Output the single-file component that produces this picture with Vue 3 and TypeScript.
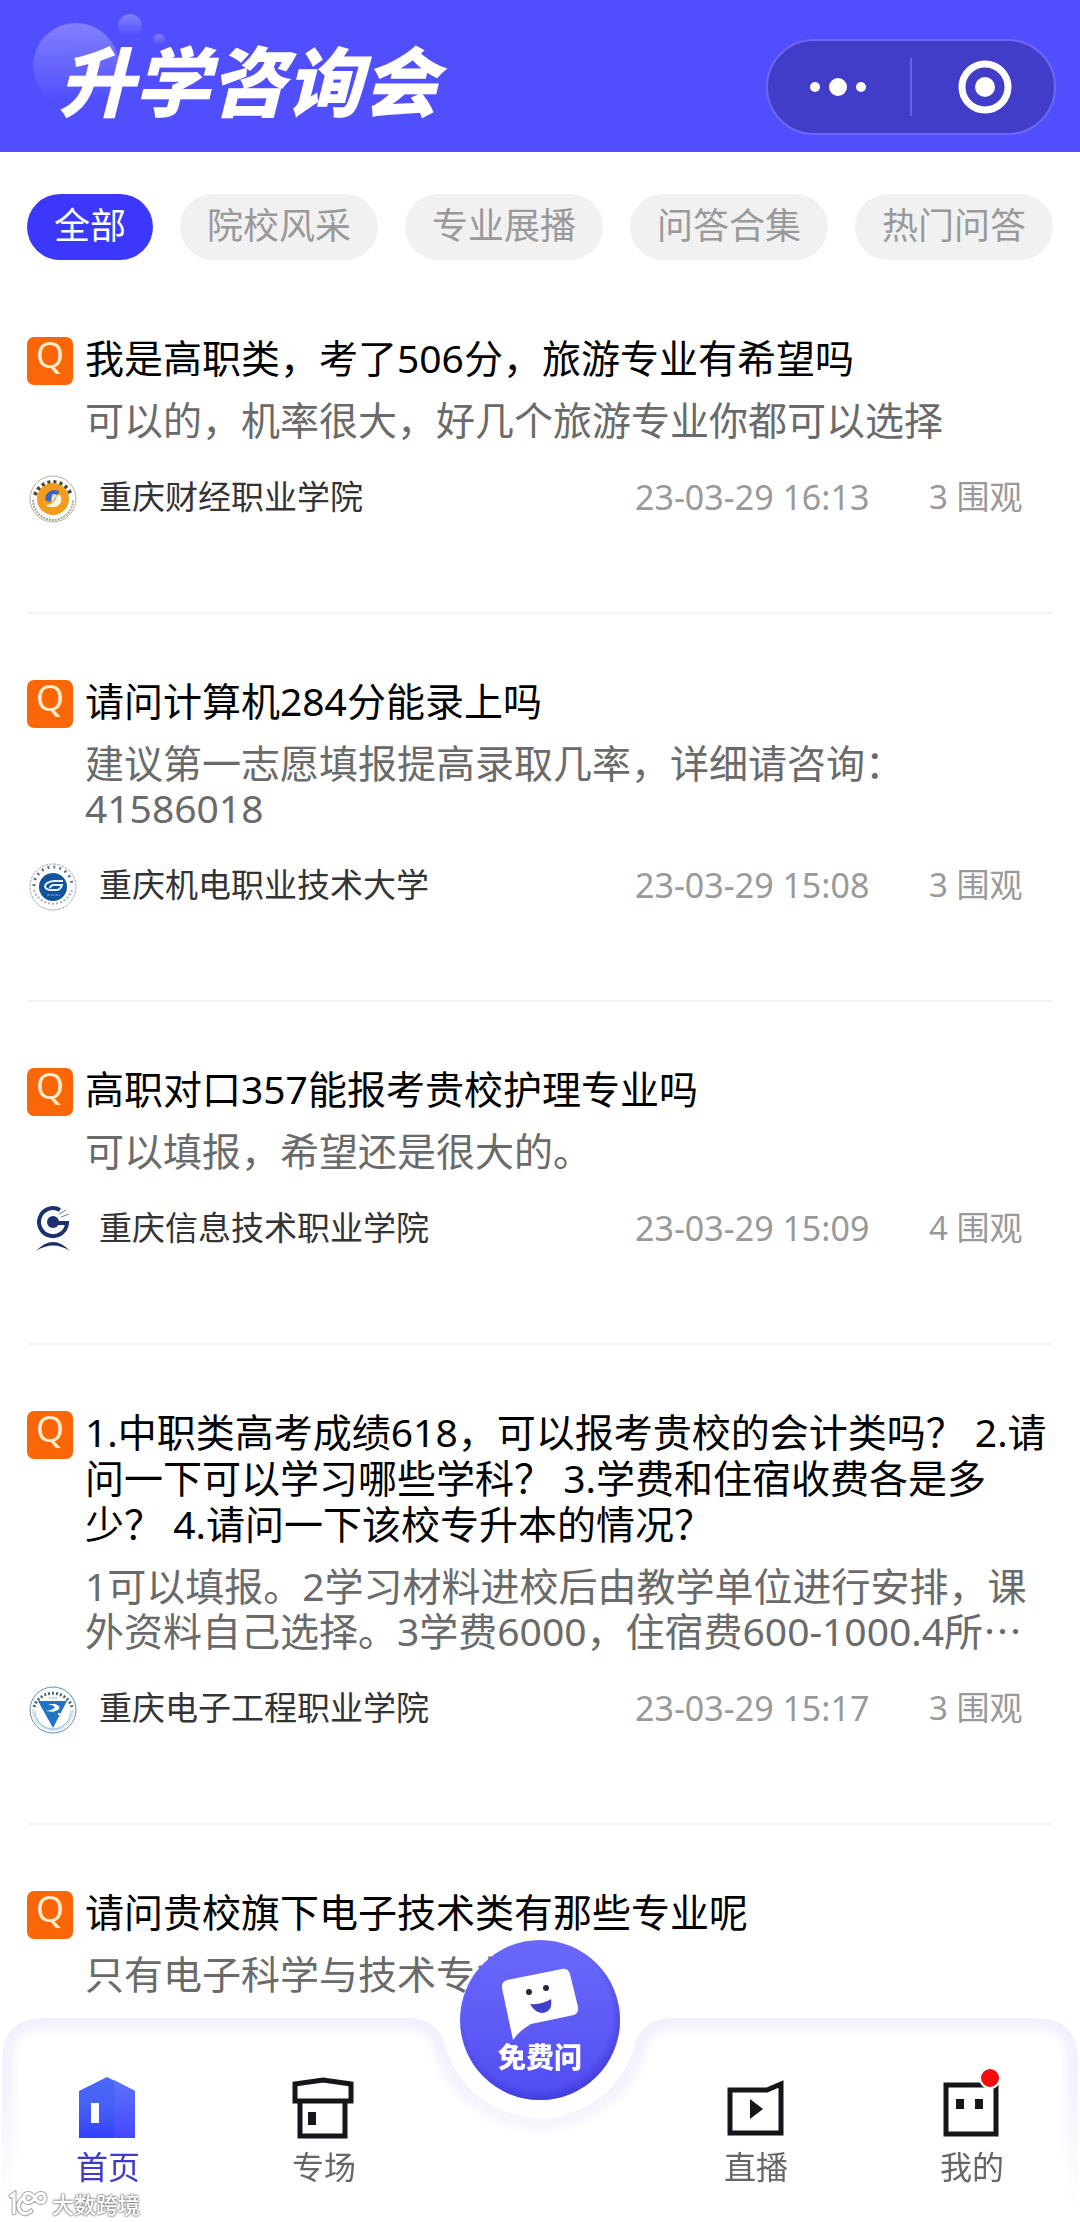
<script setup lang="ts">
import { ref } from 'vue'

interface Question {
  title: string
  answer: string
  school?: string
  logo?: 'finance' | 'mechanic' | 'info' | 'electronic'
  time?: string
  views?: number
}

const categories = ['全部', '院校风采', '专业展播', '问答合集', '热门问答']
const activeCategory = ref(0)

const questions: Question[] = [
  {
    title: '我是高职类，考了506分，旅游专业有希望吗',
    answer: '可以的，机率很大，好几个旅游专业你都可以选择',
    school: '重庆财经职业学院',
    logo: 'finance',
    time: '23-03-29 16:13',
    views: 3,
  },
  {
    title: '请问计算机284分能录上吗',
    answer: '建议第一志愿填报提高录取几率，详细请咨询：41586018',
    school: '重庆机电职业技术大学',
    logo: 'mechanic',
    time: '23-03-29 15:08',
    views: 3,
  },
  {
    title: '高职对口357能报考贵校护理专业吗',
    answer: '可以填报，希望还是很大的。',
    school: '重庆信息技术职业学院',
    logo: 'info',
    time: '23-03-29 15:09',
    views: 4,
  },
  {
    title: '1.中职类高考成绩618，可以报考贵校的会计类吗？ 2.请问一下可以学习哪些学科？ 3.学费和住宿收费各是多少？ 4.请问一下该校专升本的情况？',
    answer: '1可以填报。2学习材料进校后由教学单位进行安排，课外资料自己选择。3学费6000，住宿费600-1000.4所⋯',
    school: '重庆电子工程职业学院',
    logo: 'electronic',
    time: '23-03-29 15:17',
    views: 3,
  },
  {
    title: '请问贵校旗下电子技术类有那些专业呢',
    answer: '只有电子科学与技术专业',
  },
]
</script>

<template>
  <div class="page" lang="zh-CN">
    <header class="header">
      <svg class="bubbles" width="180" height="120" viewBox="0 0 180 120" aria-hidden="true">
        <defs>
          <linearGradient id="bubble" x1="0" y1="0" x2="0" y2="1">
            <stop offset="0" stop-color="#8280ff" />
            <stop offset="0.9" stop-color="#8280ff" stop-opacity="0" />
          </linearGradient>
        </defs>
        <circle cx="76" cy="66" r="43" fill="url(#bubble)" />
        <circle cx="130" cy="26" r="12" fill="url(#bubble)" />
        <circle cx="159" cy="40" r="6" fill="url(#bubble)" />
      </svg>
      <h1 class="brand">升学咨询会</h1>
      <div class="capsule">
        <button class="capsule-btn" type="button" aria-label="更多">
          <svg width="60" height="60" viewBox="0 0 60 60" fill="#fff">
            <circle cx="6" cy="30" r="5" />
            <circle cx="29" cy="30" r="9" />
            <circle cx="52" cy="30" r="5" />
          </svg>
        </button>
        <span class="capsule-line"></span>
        <button class="capsule-btn" type="button" aria-label="关闭">
          <svg width="60" height="60" viewBox="0 0 60 60">
            <circle cx="32" cy="30" r="23" fill="none" stroke="#fff" stroke-width="7" />
            <circle cx="32" cy="30" r="10" fill="#fff" />
          </svg>
        </button>
      </div>
    </header>

    <nav class="categories">
      <button
        v-for="(name, i) in categories"
        :key="name"
        type="button"
        class="category"
        :class="{ active: i === activeCategory }"
        @click="activeCategory = i"
      >{{ name }}</button>
    </nav>

    <main class="list">
      <article v-for="q in questions" :key="q.title" class="question">
        <div class="content">
          <span class="badge">Q</span>
          <div class="texts">
            <h2 class="title">{{ q.title }}</h2>
            <p class="answer">{{ q.answer }}</p>
          </div>
        </div>
        <div v-if="q.school" class="meta">
          <svg v-if="q.logo === 'finance'" class="logo" viewBox="0 0 48 48" fill="none" aria-hidden="true">
            <circle cx="24" cy="24" r="23" stroke="#b5b19b" />
            <path d="M6 20A19 19 0 0 1 42 20" stroke="#4a4632" stroke-width="4" stroke-dasharray="3 3" />
            <path d="M4 25A20 20 0 0 0 44 25" stroke="#a3a59f" stroke-width="2" stroke-dasharray="2 1" />
            <circle cx="24" cy="24" r="16" fill="#f39c1b" />
            <path d="M16 24Q17 15 27 15Q32 16 29 19Q22 20 22 26Q18 28 16 24Z" fill="#3f62c4" />
            <path d="M32 21Q34 30 26 32Q19 33 17 30Q25 30 28 21Q30 19 32 21Z" fill="#fff3d8" />
            <path d="M24 19Q27 19 28 21Q24 24 24 28Q21 23 24 19Z" fill="#dfe6f5" />
          </svg>
          <svg v-else-if="q.logo === 'mechanic'" class="logo" viewBox="0 0 48 48" fill="none" aria-hidden="true">
            <circle cx="24" cy="24" r="23" stroke="#93a9b5" stroke-dasharray="3 1" />
            <path d="M5 23A19 19 0 0 1 43 23" stroke="#5d7686" stroke-width="3" stroke-dasharray="2 4" />
            <path d="M5 27A20 20 0 0 0 43 27" stroke="#a3b4bd" stroke-width="2" stroke-dasharray="2 2" />
            <circle cx="24" cy="24" r="14" fill="#11549c" />
            <path d="M34 18H25Q17 19 16 23Q16 27 23 27H28Q32 26 33 22H24Q21 23 21 25" stroke="#eaf4ff" stroke-width="2" />
            <path d="M18 32H31" stroke="#8fb6dd" stroke-width="1" stroke-dasharray="3 1" />
          </svg>
          <svg v-else-if="q.logo === 'info'" class="logo" viewBox="0 0 48 48" fill="none" aria-hidden="true">
            <path d="M31 4A14 14 0 1 0 38 17H25" stroke="#1c2f6e" stroke-width="4" />
            <circle cx="24" cy="16" r="6" fill="#1c2f6e" />
            <path d="M30 8L37 4M32 11L40 8" stroke="#6e7faf" stroke-width="1" />
            <path d="M7 45Q24 27 41 45Q24 34 7 45Z" fill="#1c2f6e" />
          </svg>
          <svg v-else class="logo" viewBox="0 0 48 48" fill="none" aria-hidden="true">
            <circle cx="24" cy="24" r="23" stroke="#5b8fb6" />
            <path d="M5 21A20 20 0 0 1 43 21" stroke="#47667f" stroke-width="3" stroke-dasharray="2 2" />
            <path d="M4 24A20 20 0 0 0 44 24" stroke="#b4cfe4" stroke-width="2" stroke-dasharray="1 1" />
            <path d="M6 25A18 18 0 0 0 42 25" stroke="#8fb8d8" />
            <path d="M20 12H28" stroke="#6f9fc8" stroke-width="1" stroke-dasharray="2 1" />
            <path d="M9 15H38L24 42Z" fill="#1f74c9" />
            <path d="M19 18H26Q33 20 29 24Q25 27 17 25Q24 24 26 21Q24 19 19 18Z" fill="#fff" />
            <path d="M29 27H31V29H29Z" fill="#fff" />
          </svg>
          <span class="school">{{ q.school }}</span>
          <time class="time">{{ q.time }}</time>
          <span class="views">{{ q.views }} 围观</span>
        </div>
      </article>
    </main>

    <nav class="tabbar">
      <svg class="tabbar-bg" viewBox="0 0 1080 222" preserveAspectRatio="xMidYMin slice" aria-hidden="true">
        <defs>
          <clipPath id="bar-clip">
            <path d="M2 230V60Q2 18 44 18H408Q436 18 445 44A98 98 0 0 0 635 44Q644 18 672 18H1036Q1078 18 1078 60V230Z" />
          </clipPath>
          <linearGradient id="bar-edge" x1="0" y1="0" x2="0" y2="1">
            <stop offset="0" stop-color="#f1f0fd" />
            <stop offset="0.3" stop-color="#f3f2fd" />
            <stop offset="0.6" stop-color="#f8f8fe" />
            <stop offset="1" stop-color="#fff" stop-opacity="0" />
          </linearGradient>
          <filter id="bar-soft" x="-5%" y="-20%" width="110%" height="140%">
            <feGaussianBlur stdDeviation="5" />
          </filter>
        </defs>
        <g clip-path="url(#bar-clip)">
          <rect width="1080" height="230" fill="#fff" />
          <path d="M2 230V60Q2 18 44 18H408Q436 18 445 44A98 98 0 0 0 635 44Q644 18 672 18H1036Q1078 18 1078 60V230" fill="none" stroke="url(#bar-edge)" stroke-width="24" filter="url(#bar-soft)" />
        </g>
      </svg>

      <a class="tab current" href="#home">
        <svg class="tab-icon" viewBox="0 0 64 64" aria-hidden="true">
          <defs>
            <linearGradient id="home-left" x1="0" y1="0" x2="0" y2="1">
              <stop offset="0" stop-color="#4b68f8" />
              <stop offset="0.5" stop-color="#4560f6" />
              <stop offset="1" stop-color="#3340fb" />
            </linearGradient>
            <linearGradient id="home-right" x1="0" y1="0" x2="0" y2="1">
              <stop offset="0" stop-color="#5974fb" />
              <stop offset="1" stop-color="#4747fb" />
            </linearGradient>
          </defs>
          <path d="M3 15L31 1L59 15V62H3Z" fill="url(#home-left)" />
          <path d="M38 4L59 15V62H38Z" fill="url(#home-right)" />
          <rect x="15" y="27" width="8" height="20" fill="#fff" />
        </svg>
        <span>首页</span>
      </a>
      <a class="tab" href="#special">
        <svg class="tab-icon" viewBox="0 0 64 64" fill="none" stroke="#15161a" stroke-width="5" aria-hidden="true">
          <path d="M3 8L31 4L59 8V25H3Z" />
          <path d="M8 25V60H53V25" />
          <rect x="16" y="36" width="8" height="13" fill="#15161a" stroke="none" />
        </svg>
        <span>专场</span>
      </a>
      <div class="ask-slot">
        <button class="ask" type="button">
          <svg class="ask-art" viewBox="0 0 162 162" aria-hidden="true">
            <defs>
              <linearGradient id="ask-ball" x1="0" y1="0" x2="0" y2="1">
                <stop offset="0" stop-color="#6a68fb" />
                <stop offset="0.5" stop-color="#5f5cf6" />
                <stop offset="1" stop-color="#504cf2" />
              </linearGradient>
              <radialGradient id="ask-rim" cx="0.48" cy="0.46" r="0.54">
                <stop offset="0.86" stop-color="#3a36cf" stop-opacity="0" />
                <stop offset="1" stop-color="#3a36cf" stop-opacity="0.6" />
              </radialGradient>
            </defs>
            <circle cx="81" cy="81" r="80" fill="url(#ask-ball)" />
            <circle cx="81" cy="81" r="80" fill="url(#ask-rim)" />
            <path d="M48 41L103 30Q109 29 111 35L119 68Q120 74 115 76L72 85Q61 91 54 101L43 49Q42 43 48 41Z" fill="#fff" />
            <circle cx="70" cy="53" r="3" fill="#26263a" />
            <circle cx="87" cy="49" r="3" fill="#26263a" />
            <path d="M71 65Q83 66 92 60Q94 72 84 74Q76 74 71 65Z" fill="#443fc9" />
          </svg>
          <span class="ask-text">免费问</span>
        </button>
      </div>
      <a class="tab" href="#live">
        <svg class="tab-icon" viewBox="0 0 64 64" fill="none" stroke="#15161a" stroke-width="5" aria-hidden="true">
          <path d="M6 14H43L57 8V57H6Z" />
          <path d="M26 23L39 33L26 43Z" fill="#15161a" stroke="none" />
        </svg>
        <span>直播</span>
      </a>
      <a class="tab" href="#mine">
        <svg class="tab-icon" viewBox="0 0 64 64" fill="none" aria-hidden="true">
          <rect x="6" y="9" width="50" height="49" stroke="#15161a" stroke-width="5" />
          <path d="M16 23H24V33H16ZM35 23H43V33H35Z" fill="#15161a" />
          <circle cx="50" cy="2" r="10" fill="#f40b0d" stroke="#fff" stroke-width="2" />
        </svg>
        <span>我的</span>
      </a>

      <div class="watermark">
        <svg width="40" height="28" viewBox="0 0 40 28" fill="none" stroke-linecap="round" aria-hidden="true">
          <g stroke="#a8a8a8" stroke-width="5">
            <path d="M3 6L6 4V23M15 8Q7 15 13 22Q18 26 23 21" />
            <path d="M27 8C22 1 16 3 16 8S22 15 27 8C31 1 37 3 37 8S31 15 27 8Z" />
          </g>
          <g stroke="#fff" stroke-width="3">
            <path d="M3 6L6 4V23M15 8Q7 15 13 22Q18 26 23 21" />
            <path d="M27 8C22 1 16 3 16 8S22 15 27 8C31 1 37 3 37 8S31 15 27 8Z" />
          </g>
        </svg>
        <span>大数跨境</span>
      </div>
    </nav>
  </div>
</template>

<style>
body {
  margin: 0;
  background: #fff;
}
</style>

<style scoped>
.page {
  min-height: 100vh;
  box-sizing: border-box;
  padding-bottom: 130px;
  background: #fff;
  font-family: "Noto Sans", "Noto Sans CJK SC", sans-serif;
}

button {
  margin: 0;
  padding: 0;
  border: 0;
  background: none;
  font-family: inherit;
}

.header {
  position: relative;
  display: flex;
  align-items: center;
  justify-content: space-between;
  height: 152px;
  box-sizing: border-box;
  padding: 22px 24px 0 58px;
  background: #514ffd;
}

.bubbles {
  position: absolute;
  left: 0;
  top: 0;
}

.brand {
  position: relative;
  margin: 0;
  padding-bottom: 18px;
  color: #fff;
  font-family: "Noto Sans CJK SC", sans-serif;
  font-size: 76px;
  line-height: 76px;
  font-weight: 900;
  font-style: italic;
}

.capsule {
  display: flex;
  align-items: center;
  width: 290px;
  height: 96px;
  box-sizing: border-box;
  border: 2px solid #6b68f3;
  border-radius: 48px;
  background: #413dc9;
}

.capsule-btn {
  display: flex;
  flex: 1;
  align-items: center;
  justify-content: center;
}

.capsule-line {
  width: 2px;
  height: 58px;
  background: #6461e6;
}

.categories {
  display: flex;
  gap: 27px;
  padding: 42px 27px 0;
}

.category {
  flex: none;
  height: 66px;
  padding: 0 27px 2px;
  border-radius: 33px;
  background: #f1f1f2;
  color: #999;
  font-size: 36px;
  line-height: 64px;
}

.category.active {
  background: #3b38fb;
  color: #fff;
}

.list {
  padding: 11px 27px 0;
}

.question {
  padding: 66px 0 89px;
  border-bottom: 2px solid #f3f3f3;
}

.question:last-child {
  border-bottom: 0;
}

.content {
  display: flex;
  align-items: flex-start;
  gap: 12px;
}

.badge {
  flex: none;
  width: 46px;
  height: 48px;
  border-radius: 7px;
  background: #fa6608;
  color: #ffecc9;
  font-size: 36px;
  line-height: 36px;
  text-align: center;
}

.texts {
  flex: 1;
  min-width: 0;
  margin-top: -2px;
}

.title {
  margin: 0;
  color: #000;
  font-size: 39px;
  line-height: 46px;
  font-weight: 400;
}

.answer {
  margin: 16px 0 0;
  color: #6a6a6a;
  font-size: 39px;
  line-height: 45px;
}

.meta {
  display: grid;
  grid-template-columns: 48px 1fr 294px 124px;
  align-items: start;
  margin-top: 33px;
  padding-left: 2px;
  font-size: 33px;
  line-height: 44px;
}

.logo {
  width: 48px;
  height: 48px;
}

.school {
  padding-left: 22px;
  color: #333;
}

.time,
.views {
  color: #999;
}

.time {
  font-size: 34px;
}

.tabbar {
  position: fixed;
  left: 0;
  right: 0;
  bottom: 0;
  display: flex;
  height: 222px;
}

.tabbar-bg {
  position: absolute;
  left: 0;
  top: 0;
  width: 100%;
  height: 222px;
}

.tab,
.ask-slot {
  position: relative;
  display: flex;
  flex: 1;
  flex-direction: column;
  align-items: center;
}

.tab {
  padding-top: 76px;
  color: #666;
  font-size: 32px;
  line-height: 36px;
  text-decoration: none;
}

.tab.current {
  color: #3f3bc4;
}

.tab-icon {
  width: 64px;
  height: 64px;
  margin-bottom: 9px;
  overflow: visible;
}

.ask {
  position: absolute;
  top: -61px;
  width: 162px;
  height: 162px;
  border-radius: 50%;
}

.ask-art {
  display: block;
  width: 100%;
}

.ask-text {
  position: absolute;
  left: 0;
  right: 0;
  top: 100px;
  color: #fff;
  font-size: 28px;
  line-height: 36px;
  font-weight: 900;
}

.watermark {
  position: absolute;
  left: 8px;
  bottom: 4px;
  display: flex;
  align-items: center;
  gap: 4px;
  color: #fff;
  font-size: 22px;
  line-height: 28px;
  font-weight: 500;
  text-shadow: 0 0 2px #777, 0 0 2px #888, 0 0 3px #999;
}
</style>
